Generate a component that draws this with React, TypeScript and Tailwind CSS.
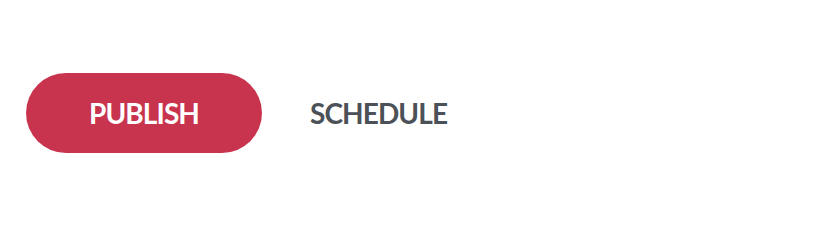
export default function App() {
  return (
    <div className="w-[816px] h-[208px] bg-white pt-[73px] pl-[26px]" style={{ fontFamily: 'Lato, "Open Sans", sans-serif' }}>
      <div className="flex items-center">
        <button className="w-[236px] h-[80px] rounded-full bg-[#c8344d] text-white text-[28px] font-bold tracking-[-0.9px] flex items-center justify-center">
          PUBLISH
        </button>
        <button className="ml-[48px] text-[#4b5157] text-[28px] font-bold tracking-[-0.9px]">
          SCHEDULE
        </button>
      </div>
    </div>
  );
}
